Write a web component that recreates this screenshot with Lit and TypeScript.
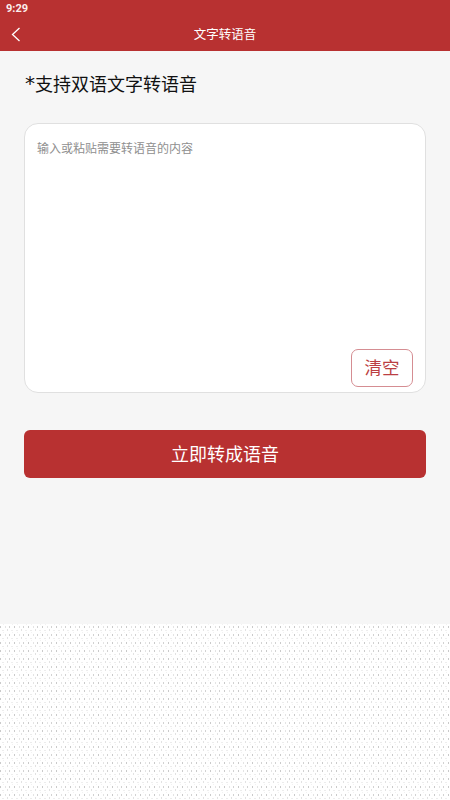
import { LitElement, html, css } from "lit";
import { customElement } from "lit/decorators.js";

@customElement("app-root")
export class AppRoot extends LitElement {
  static styles = css`
    :host {
      display: flex;
      flex-direction: column;
      width: 450px;
      height: 800px;
      background: #f6f6f6;
      font-family: "Noto Sans CJK SC", "Liberation Sans", sans-serif;
      overflow: hidden;
    }
    .appbar {
      background: #b83131;
      color: #fff;
      height: 51px;
      flex: none;
      display: flex;
      flex-direction: column;
    }
    .status {
      height: 18px;
      padding-left: 6px;
      font: 700 11px/18px "Roboto", "Liberation Sans", sans-serif;
      color: #fbeeee;
    }
    .nav {
      flex: 1;
      position: relative;
      display: flex;
      align-items: center;
      justify-content: center;
      font-size: 12.5px;
      line-height: 31px;
      padding-bottom: 2px;
    }
    .back {
      position: absolute;
      left: 11px;
      top: 9px;
      width: 10px;
      height: 15px;
      stroke: #fff;
      stroke-width: 1.3;
      fill: none;
    }
    .main {
      flex: none;
      height: 573px;
      box-sizing: border-box;
      padding: 20px 24px 0;
      display: flex;
      flex-direction: column;
    }
    .hint {
      margin: 0 0 0 1px;
      height: 24px;
      font-size: 18px;
      line-height: 24px;
      font-weight: 400;
      color: #111;
      display: flex;
    }
    .star {
      width: 10px;
      font-family: "DejaVu Sans", sans-serif;
      font-size: 20px;
    }
    .card {
      margin-top: 28px;
      height: 270px;
      box-sizing: border-box;
      background: #fff;
      border: 1px solid #e0e0e0;
      border-radius: 14px;
      padding: 15px 12px 5px;
      display: flex;
      flex-direction: column;
      justify-content: space-between;
    }
    .placeholder {
      font-size: 12px;
      line-height: 18px;
      color: #8f8f8f;
    }
    .clear {
      align-self: flex-end;
      width: 62px;
      height: 38px;
      box-sizing: border-box;
      border: 1px solid #d58d92;
      border-radius: 7px;
      background: #fff;
      color: #bb3f43;
      font: inherit;
      font-size: 17.5px;
      line-height: 34px;
      padding: 0 0 2px;
      text-align: center;
    }
    .submit {
      margin-top: 37px;
      height: 48px;
      border: none;
      border-radius: 6px;
      background: #b83131;
      color: #fff;
      font: inherit;
      font-size: 18px;
      line-height: 46px;
      padding: 0 0 2px;
    }
    .pattern {
      flex: 1;
      display: block;
      width: 450px;
      background: #fff;
    }
  `;

  render() {
    return html`
      <header class="appbar">
        <div class="status">9:29</div>
        <div class="nav">
          <svg class="back" viewBox="0 0 10 15"><path d="M8.5 1 1.5 7.5l7 6.5" /></svg>
          文字转语音
        </div>
      </header>
      <main class="main">
        <h1 class="hint"><span class="star">*</span><span>支持双语文字转语音</span></h1>
        <section class="card">
          <div class="placeholder">输入或粘贴需要转语音的内容</div>
          <button class="clear">清空</button>
        </section>
        <button class="submit">立即转成语音</button>
      </main>
      <svg class="pattern" height="176" aria-hidden="true">
        <defs>
          <pattern id="dots" width="14" height="8" patternUnits="userSpaceOnUse">
            <rect x="0" y="2" width="1" height="2" fill="#cacaca" />
            <rect x="5" y="2" width="1" height="2" fill="#e4e4e4" />
            <rect x="9" y="2" width="1" height="2" fill="#d2d2d2" />
            <rect x="2" y="6" width="2" height="1" fill="#ececec" />
            <rect x="7" y="5" width="1" height="2" fill="#e2e2e2" />
            <rect x="11" y="6" width="2" height="1" fill="#eeeeee" />
            <rect x="3" y="0" width="1" height="1" fill="#f2f2f2" />
            <rect x="12" y="0" width="1" height="1" fill="#f2f2f2" />
          </pattern>
        </defs>
        <rect width="450" height="176" fill="url(#dots)" />
      </svg>
    `;
  }
}
